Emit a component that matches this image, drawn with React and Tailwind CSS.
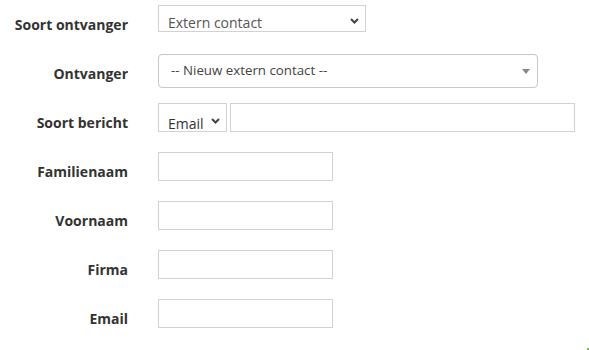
import React from 'react';

const font = { fontFamily: '"Open Sans", "Liberation Sans", sans-serif' };

const Chevron = () => (
  <svg width="9" height="6" viewBox="0 0 9 6" className="text-[#444]">
    <path d="M1 1l3.5 3.5L8 1" fill="none" stroke="currentColor" strokeWidth="2" />
  </svg>
);

const Row = ({ label, children }) => (
  <div className="flex h-[49px]">
    <label className="w-[128px] shrink-0 pt-[11px] text-right text-[14px] leading-[18px] font-bold text-[#333]">
      {label}
    </label>
    <div className="ml-[30px] flex items-start">{children}</div>
  </div>
);

const TextInput = ({ width = 'w-[175px]' }) => (
  <input type="text" className={`${width} h-[29px] border border-[#d2d2d2] bg-white px-2 text-[13px] outline-none`} />
);

export default function App() {
  return (
    <div className="relative h-[350px] w-[589px] bg-white pt-[5px]" style={font}>
      <Row label="Soort ontvanger">
        <div className="flex h-[27px] w-[208px] items-start justify-between overflow-hidden border border-[#d2d2d2] bg-white pl-[9px] pr-[6px] pt-[7px] text-[14px] leading-[19px] text-[#555]">
          <span>Extern contact</span>
          <span className="mt-[5px] flex"><Chevron /></span>
        </div>
      </Row>
      <Row label="Ontvanger">
        <div className="flex h-[34px] w-[380px] items-center justify-between rounded-[4px] border border-[#c8c8c8] bg-white pl-[12px] pr-[7px] text-[13.3px] text-[#444]">
          <span>-- Nieuw extern contact --</span>
          <svg width="8" height="5" viewBox="0 0 8 5">
            <path d="M0 0h8L4 5z" fill="#888" />
          </svg>
        </div>
      </Row>
      <Row label="Soort bericht">
        <div className="flex gap-[3px]">
          <div className="flex h-[29px] w-[69px] items-start justify-between overflow-hidden border border-[#d2d2d2] bg-white pl-[9px] pr-[6px] pt-[10px] text-[14px] leading-[19px] text-[#333]">
            <span>Email</span>
            <span className="mt-[4px] flex"><Chevron /></span>
          </div>
          <TextInput width="w-[345px]" />
        </div>
      </Row>
      <Row label="Familienaam">
        <TextInput />
      </Row>
      <Row label="Voornaam">
        <TextInput />
      </Row>
      <Row label="Firma">
        <TextInput />
      </Row>
      <Row label="Email">
        <TextInput />
      </Row>
      <div className="absolute bottom-0 right-0 h-[2px] w-[2px] bg-[#7cc23a]" />
    </div>
  );
}
